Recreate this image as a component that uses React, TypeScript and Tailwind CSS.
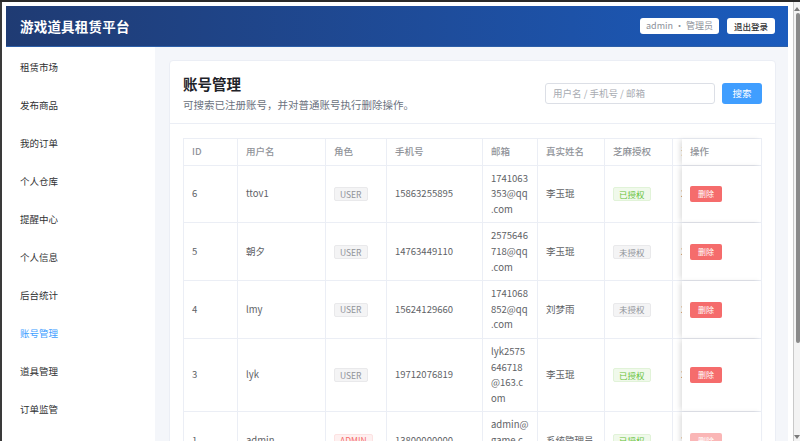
import React from 'react';

type Row = {
  id: string;
  name: string;
  role: 'USER' | 'ADMIN';
  phone: string;
  email: string[];
  real: string;
  auth: boolean;
  created: string;
};

const rows: Row[] = [
  { id: '6', name: 'ttov1', role: 'USER', phone: '15863255895', email: ['1741063', '353@qq', '.com'], real: '李玉琨', auth: true, created: '2025' },
  { id: '5', name: '朝夕', role: 'USER', phone: '14763449110', email: ['2575646', '718@qq', '.com'], real: '李玉琨', auth: false, created: '2025' },
  { id: '4', name: 'lmy', role: 'USER', phone: '15624129660', email: ['1741068', '852@qq', '.com'], real: '刘梦雨', auth: false, created: '2025' },
  { id: '3', name: 'lyk', role: 'USER', phone: '19712076819', email: ['lyk2575', '646718', '@163.c', 'om'], real: '李玉琨', auth: true, created: '2025' },
  { id: '1', name: 'admin', role: 'ADMIN', phone: '13800000000', email: ['admin@', 'game.c', 'om'], real: '系统管理员', auth: true, created: '2025' },
];

const menu = ['租赁市场', '发布商品', '我的订单', '个人仓库', '提醒中心', '个人信息', '后台统计', '账号管理', '道具管理', '订单监管'];

const font = { fontFamily: '"Noto Sans CJK SC", "Noto Sans", sans-serif' };

function Tag({ children, tone }: { children: React.ReactNode; tone: 'gray' | 'green' | 'red' }) {
  const cls =
    tone === 'green'
      ? 'bg-[#f0f9eb] border-[#e1f3d8] text-[#67c23a]'
      : tone === 'red'
        ? 'bg-[#fef0f0] border-[#fde2e2] text-[#f56c6c]'
        : 'bg-[#f4f4f5] border-[#e9e9eb] text-[#909399]';
  return (
    <span className={`inline-flex items-center h-[14px] px-[5px] rounded-[2px] border text-[8.5px] leading-none ${cls}`}>
      {children}
    </span>
  );
}

function Cell({ w, children }: { w: string; children?: React.ReactNode }) {
  return (
    <div className={`${w} shrink-0 flex items-center pl-[8px] pr-[6px] py-[5px] border-r border-[#ebeef5]`}>
      {children}
    </div>
  );
}

export default function App() {
  return (
    <div style={font} className="w-[800px] h-[441px] overflow-hidden bg-white border-t-2 border-[#2a2a2a] flex">
      <div className="flex-1 min-w-0 border-l-2 border-[#3a3a3a] pl-[4px] pt-[4px] pr-[5px] flex flex-col">
        {/* Header */}
        <header className="h-[41px] shrink-0 flex items-center justify-between pl-[14px] pr-[13px] bg-gradient-to-r from-[#1f3b73] to-[#1a5bbd] border-b border-[#2d5fa8]">
          <h1 className="text-white text-[13.5px] font-bold tracking-[0.2px]">游戏道具租赁平台</h1>
          <div className="flex items-center gap-[8px]">
            <span className="h-[16px] px-[6px] rounded-[3px] bg-white text-[9px] text-[#8b9099] flex items-center">admin · 管理员</span>
            <button className="h-[16px] w-[48px] rounded-[3px] bg-white text-[8.5px] text-[#303133] font-medium flex items-center justify-center">退出登录</button>
          </div>
        </header>

        <div className="flex-1 min-h-0 flex">
          {/* Sidebar */}
          <nav className="w-[149px] shrink-0 bg-white pt-px">
            {menu.map((m) => (
              <div
                key={m}
                className={`h-[38px] flex items-center pl-[14px] text-[9.5px] ${m === '账号管理' ? 'text-[#409eff]' : 'text-[#303133]'}`}
              >
                {m}
              </div>
            ))}
          </nav>

          {/* Main */}
          <main className="flex-1 min-w-0 bg-[#f4f6fa] pl-[14px] pt-[13px] pr-[12px]">
            <section className="bg-white border border-[#ebeef5] rounded-[4px]">
              <div className="flex items-center justify-between px-[13px] pt-[13px] pb-[11px] border-b border-[#ebeef5]">
                <div>
                  <h2 className="text-[14.5px] leading-[20px] font-bold text-[#1f2329]">账号管理</h2>
                  <p className="mt-[3px] text-[10.5px] leading-[15px] text-[#6b7280]">可搜索已注册账号，并对普通账号执行删除操作。</p>
                </div>
                <div className="flex items-center gap-[7px]">
                  <div className="w-[170px] h-[21px] border border-[#dcdfe6] rounded-[3px] flex items-center pl-[7px] text-[9.5px] text-[#a8abb2]">
                    用户名 / 手机号 / 邮箱
                  </div>
                  <button className="w-[40px] h-[21px] rounded-[3px] bg-[#409eff] text-white text-[9.5px] flex items-center justify-center">搜索</button>
                </div>
              </div>

              <div className="px-[13px] pt-[14px]">
                <div className="border-l border-t border-[#ebeef5] text-[9.5px] leading-[15.6px] text-[#606266]">
                  {/* Head */}
                  <div className="flex border-b border-[#ebeef5] text-[#909399] font-medium">
                    <Cell w="w-[54px]">ID</Cell>
                    <Cell w="w-[88px]">用户名</Cell>
                    <Cell w="w-[61px]">角色</Cell>
                    <Cell w="w-[96px]">手机号</Cell>
                    <Cell w="w-[55px]">邮箱</Cell>
                    <Cell w="w-[67px]">真实姓名</Cell>
                    <Cell w="w-[68px]">芝麻授权</Cell>
                    <div className="w-[9px] shrink-0 overflow-hidden whitespace-nowrap pl-[8px] flex items-center">注</div>
                    <div className="flex-1 flex items-center pl-[8px] border-r border-[#ebeef5] bg-white shadow-[-3px_0_5px_-1px_rgba(0,0,0,0.13)]">操作</div>
                  </div>
                  {rows.map((r) => (
                    <div key={r.id} className="flex border-b border-[#ebeef5]">
                      <Cell w="w-[54px]">{r.id}</Cell>
                      <Cell w="w-[88px]">{r.name}</Cell>
                      <Cell w="w-[61px]">
                        <Tag tone={r.role === 'ADMIN' ? 'red' : 'gray'}>{r.role}</Tag>
                      </Cell>
                      <Cell w="w-[96px]">{r.phone}</Cell>
                      <Cell w="w-[55px]">
                        <div>
                          {r.email.map((l, i) => (
                            <div key={i} className="whitespace-nowrap">{l}</div>
                          ))}
                        </div>
                      </Cell>
                      <Cell w="w-[67px]">{r.real}</Cell>
                      <Cell w="w-[68px]">
                        <Tag tone={r.auth ? 'green' : 'gray'}>{r.auth ? '已授权' : '未授权'}</Tag>
                      </Cell>
                      <div className="w-[9px] shrink-0 overflow-hidden whitespace-nowrap pl-[8px] flex items-center">{r.created}</div>
                      <div className="flex-1 flex items-center pl-[8px] border-r border-[#ebeef5] bg-white shadow-[-3px_0_5px_-1px_rgba(0,0,0,0.13)]">
                        <button
                          className={`w-[32px] h-[16px] rounded-[2px] text-white text-[8px] flex items-center justify-center ${r.role === 'ADMIN' ? 'bg-[#fab6b6]' : 'bg-[#f56c6c]'}`}
                        >
                          删除
                        </button>
                      </div>
                    </div>
                  ))}
                </div>
              </div>
            </section>
          </main>
        </div>
      </div>

      {/* Browser scrollbar */}
      <div className="w-[7px] shrink-0 bg-[#f3f3f3] border-l border-[#c9c9c9] flex flex-col items-end">
        <svg width="6" height="11" viewBox="0 0 6 11" className="shrink-0">
          <path d="M3 5 L6 9 L0 9 Z" fill="#7a7a7a" />
        </svg>
        <div className="w-[4px] h-[330px] rounded-full bg-[#8a8a8a]" />
        <div className="flex-1" />
        <svg width="6" height="8" viewBox="0 0 6 8" className="shrink-0">
          <path d="M0 2 L6 2 L3 6 Z" fill="#7a7a7a" />
        </svg>
      </div>
    </div>
  );
}
